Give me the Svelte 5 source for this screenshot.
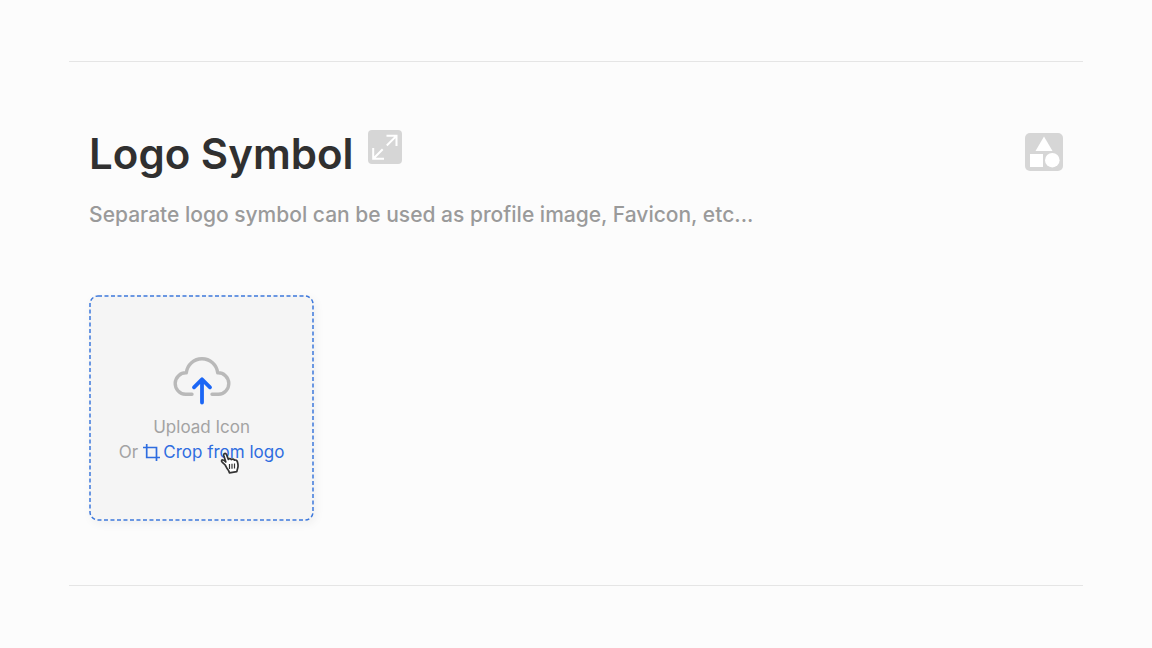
<script lang="ts">
  let fileInput: HTMLInputElement;

  const openPicker = () => fileInput.click();
</script>

<main>
  <section>
    <header>
      <h1>Logo Symbol</h1>
      <button class="icon-button expand" type="button" aria-label="Expand">
        <svg width="34" height="34" viewBox="0 0 34 34">
          <rect width="34" height="34" rx="4" fill="#d6d6d6" />
          <g fill="none" stroke="#fff" stroke-width="2">
            <path d="M18.5 5.8H28.5V16M28.2 6.1L18.8 15.5" />
            <path d="M5.2 18V28.8H16M5.5 28.5L14.7 19.3" />
          </g>
        </svg>
      </button>
      <button class="icon-button shapes" type="button" aria-label="Symbol shapes">
        <svg width="38" height="38" viewBox="0 0 38 38">
          <rect width="38" height="38" rx="5" fill="#d6d6d6" />
          <g fill="#fff">
            <path d="M19 3.5L27.5 18H10.5Z" />
            <rect x="5" y="21" width="13" height="13" />
            <circle cx="27.3" cy="27.2" r="7.3" />
          </g>
        </svg>
      </button>
    </header>

    <p class="description">
      Separate logo symbol can be used as profile image, Favicon, etc...
    </p>

    <div class="dropzone">
      <svg class="outline" aria-hidden="true">
        <rect x="1" y="1" rx="8" />
      </svg>
      <label class="upload">
        <svg width="60" height="50" viewBox="0 0 60 50" fill="none" stroke-linecap="round">
          <path
            d="M20 38.2H13.5A10.7 10.7 0 1 1 14.3 16.8A15.8 15.8 0 0 1 45.7 16.8A10.7 10.7 0 1 1 46.5 38.2H40"
            stroke="#b9b9b9"
            stroke-width="3.4"
            stroke-linejoin="round"
          />
          <path
            d="M30 46.5V24M22 31.3L30 23.3L38 31.3"
            stroke="#1b66f5"
            stroke-width="3.8"
            stroke-linejoin="round"
          />
        </svg>
        <span>Upload Icon</span>
        <input bind:this={fileInput} type="file" accept="image/*" />
      </label>
      <div class="alternative">
        Or
        <button class="crop" type="button" on:click={openPicker}>
          <svg width="17" height="17" viewBox="0 0 17 17" fill="none" stroke="#2f6de0">
            <path d="M0 3.5H13.5V17" stroke-width="1.7" />
            <path d="M3.7 0V13.5H17" stroke-width="1.7" />
          </svg>
          Crop from logo
        </button>
        <svg class="pointer" width="20" height="22" viewBox="0 0 20 22" aria-hidden="true">
          <path
            d="M5.2 13L2.4 10.4C1 9.4 1.4 7.8 3 8C4 8.2 4.8 9 5.8 10L3.8 3.4C3.3 1.4 5.6 .6 6.4 2.4L8.4 7.4C9 6.4 10.8 6.4 11.4 7.6C12.4 6.7 13.8 7 14.4 8.2C15.8 7.6 17 8.4 17.4 9.8C18 12 18.6 14 17.6 16.4L16.8 19.6L9.4 20.8L8.6 18.6C7 17.2 6.2 15 5.2 13Z"
            fill="#fff"
            stroke="#333"
            stroke-width="1.7"
            stroke-linejoin="round"
          />
          <path d="M9.5 12V17M12 11.7V16.7M14.5 11.4V16.4" stroke="#333" stroke-width="1.2" />
        </svg>
      </div>
    </div>
  </section>
</main>

<style>
  :global(body) {
    margin: 0;
    background: #fcfcfc;
  }
  main {
    padding: 61px 6%;
    font-family: Inter, "Liberation Sans", sans-serif;
  }
  section {
    padding: 64px 20px;
    border-top: 1px solid #e5e5e5;
    border-bottom: 1px solid #e5e5e5;
  }
  header {
    display: flex;
    align-items: flex-start;
  }
  h1 {
    margin: 0;
    font-size: 42px;
    line-height: 56px;
    font-weight: 600;
    color: #303030;
  }
  button {
    padding: 0;
    border: 0;
    background: none;
    font: inherit;
    cursor: pointer;
  }
  .icon-button svg {
    display: block;
  }
  .expand {
    margin: 4px 0 0 15px;
  }
  .shapes {
    margin: 7px 0 0 auto;
  }
  .description {
    margin: 17px 0 64px;
    font-size: 21px;
    line-height: 32px;
    font-weight: 500;
    color: #9a9a9a;
  }
  .dropzone {
    position: relative;
    box-sizing: border-box;
    width: 225px;
    height: 226px;
    padding-top: 61px;
    border-radius: 9px;
    background: #f5f5f5;
    box-shadow: 2px 3px 10px rgba(0, 0, 0, 0.05);
    font-size: 17px;
    line-height: 25px;
    text-align: center;
    color: #a3a3a3;
  }
  .outline {
    position: absolute;
    inset: 0;
    width: 100%;
    height: 100%;
    pointer-events: none;
  }
  .outline rect {
    width: calc(100% - 2px);
    height: calc(100% - 2px);
    fill: none;
    stroke: #3d78dc;
    stroke-width: 1.5;
    stroke-dasharray: 4 2.5;
  }
  .upload {
    display: flex;
    flex-direction: column;
    align-items: center;
    gap: 9px;
    cursor: pointer;
  }
  .upload input {
    position: absolute;
    width: 1px;
    height: 1px;
    opacity: 0;
  }
  .alternative {
    position: relative;
    display: flex;
    justify-content: center;
    gap: 5px;
  }
  .crop {
    display: flex;
    align-items: center;
    gap: 3px;
    color: #2f6de0;
  }
  .pointer {
    position: absolute;
    top: 12px;
    left: 131px;
  }
</style>
